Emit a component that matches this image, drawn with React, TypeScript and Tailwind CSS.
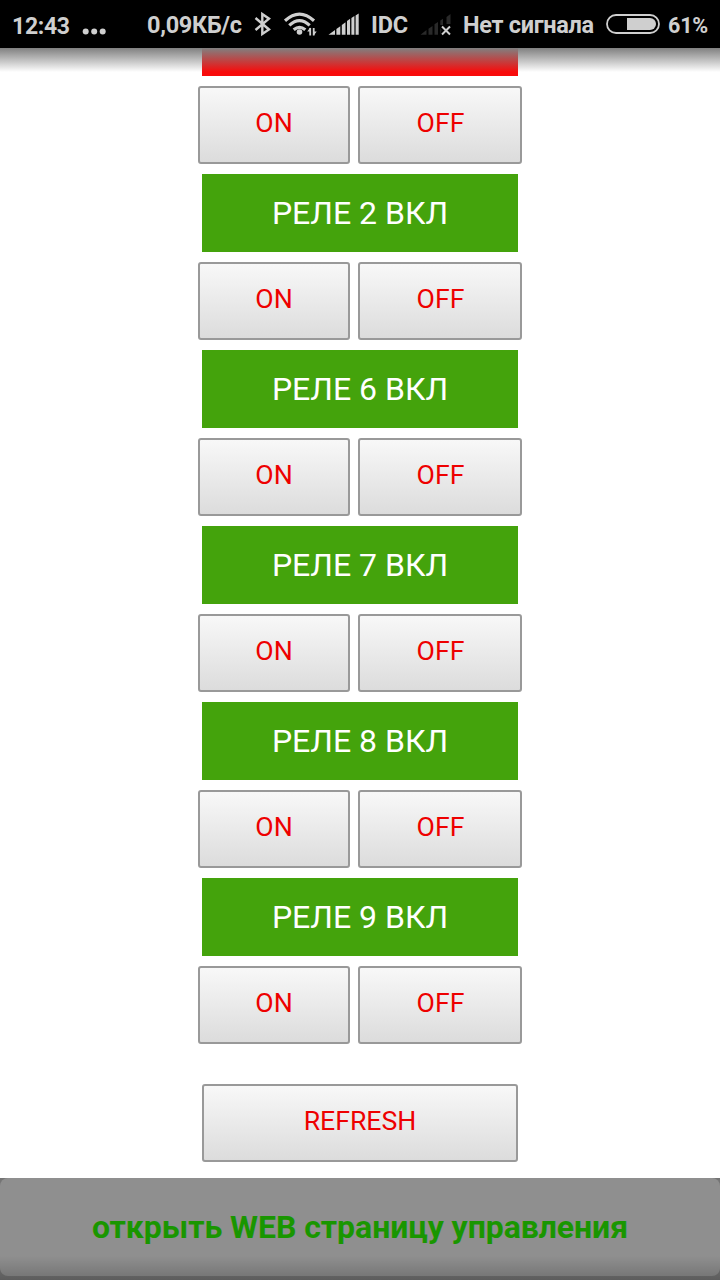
import React from "react";

const relays = [2, 6, 7, 8, 9];

const buttonFace =
  "flex h-[78px] items-center justify-center rounded-[3px] border-2 border-[#999] bg-linear-to-b from-[#f8f8f8] to-[#dcdcdc] pb-1 text-[26.67px] leading-none text-[#ee0000]";

function SwitchRow() {
  return (
    <div className="flex w-[324px] justify-between">
      <button className={`${buttonFace} w-[152px]`}>ON</button>
      <button className={`${buttonFace} w-[164px] pl-px`}>OFF</button>
    </div>
  );
}

function RelayGroup({ id }: { id: number }) {
  return (
    <div className="flex flex-col items-center gap-2.5">
      <div className="flex h-[78px] w-[316px] items-center justify-center bg-[#44a30c] text-[32px] leading-none text-white">
        РЕЛЕ {id} ВКЛ
      </div>
      <SwitchRow />
    </div>
  );
}

function StatusBar() {
  return (
    <header className="flex h-12 w-full shrink-0 items-center bg-black text-[23.5px] leading-none font-bold tracking-[-0.15px] whitespace-nowrap text-[#cfcfcf]">
      <span className="ml-3 w-[70px] pt-1 text-[23px] tracking-[-0.3px]">12:43</span>
      <svg className="h-12 w-[24px]" viewBox="82 0 24 48" fill="#cfcfcf">
        <circle cx="85.7" cy="31.5" r="3" />
        <circle cx="94.2" cy="31.5" r="3" />
        <circle cx="102.7" cy="31.5" r="3" />
      </svg>
      <span className="ml-[41px] w-[99px] pt-1 tracking-[-0.3px]">0,09КБ/с</span>
      <svg className="h-12 w-[30px]" viewBox="246 0 30 48" fill="none" stroke="#cfcfcf" strokeWidth="2.4">
        <path d="M255.5 18 L269 29.5 L262.3 34 V14 L269 18.7 L255.5 30" />
      </svg>
      <svg className="h-12 w-[46px]" viewBox="276 0 46 48" fill="none" stroke="#cfcfcf">
        <path d="M285 20.8 Q299.5 7.6 314 20.8 M289.3 25.4 Q299.5 15.9 309.7 25.4 M293.7 29.8 Q299.5 24.8 305.3 29.8" strokeWidth="3.2" />
        <circle cx="299.5" cy="32" r="2.8" fill="#cfcfcf" stroke="none" />
        <path d="M310.2 35.5 V28 M313.7 28 V35.5" strokeWidth="1.8" />
        <path d="M307.2 31.5 L310.2 27.5 V31.5 Z M316.7 31.5 L313.7 35.5 V31.5 Z" fill="#cfcfcf" stroke="none" />
      </svg>
      <svg className="h-12 w-[48px]" viewBox="322 0 48 48" fill="#cfcfcf">
        <path d="M328.5 34.7 L335 30 V34.7 Z M336.4 28.9 L340.3 26.2 V34.7 H336.4 Z M341.8 25 L345.5 22.3 V34.7 H341.8 Z M347 21 L350.1 18.8 V34.7 H347 Z M351.4 18 L354.4 16 V34.7 H351.4 Z M355.6 15.4 L358.7 13.5 V34.7 H355.6 Z" />
      </svg>
      <span className="w-[50px] pt-1 pl-px">IDC</span>
      <svg className="h-12 w-[42px]" viewBox="420 0 42 48">
        <path fill="#292929" d="M420.5 34.7 L426.5 30 V34.7 Z M428.5 28.7 L432.5 26 V34.7 H428.5 Z M434.5 24.3 L438 22 V34.7 H434.5 Z M440.3 20.6 L443 18.8 V25 H440.3 Z M440.3 28 L441.5 30 L440.3 34.7 Z M446.5 17 L450.5 14 V24 H446.5 Z" />
        <path fill="none" stroke="#cfcfcf" strokeWidth="2" d="M442 26.5 L450 34.5 M450 26.5 L442 34.5" />
      </svg>
      <span className="w-[144px] pt-1 pl-px tracking-[-0.3px]">Нет сигнала</span>
      <svg className="h-12 w-[54px]" viewBox="606 0 54 48">
        <rect x="607" y="15" width="52" height="18" rx="9" fill="none" stroke="#cfcfcf" strokeWidth="1.8" />
        <path fill="#cfcfcf" d="M627 18 H650 A6 6 0 0 1 650 30 H627 Z" />
      </svg>
      <span className="ml-2 pt-1 text-[21.5px]">61%</span>
    </header>
  );
}

export default function App() {
  return (
    <div className="relative flex h-[1280px] w-[720px] flex-col overflow-hidden bg-white font-[Roboto,sans-serif]">
      <StatusBar />
      <main className="flex h-[1130px] flex-col items-center gap-2.5">
        <div className="h-7 w-[316px] bg-[#f80b0b]" />
        <SwitchRow />
        {relays.map((id) => (
          <RelayGroup key={id} id={id} />
        ))}
        <button className={`${buttonFace} mt-[30px] w-[316px]`}>REFRESH</button>
      </main>
      <footer className="h-[102px] bg-[#747474]">
        <button className="flex h-[98px] w-full items-center justify-center rounded-lg bg-[#8f8f8f] text-[32px] leading-none font-bold tracking-[-0.06px] text-[#199600]">
          открыть WEB страницу управления
        </button>
      </footer>
      <div className="pointer-events-none absolute inset-x-0 top-12 h-6 bg-linear-to-b from-[#808080] to-[#808080]/0" />
      <div className="pointer-events-none absolute inset-x-0 bottom-0 h-6 bg-linear-to-b from-transparent to-black/20" />
    </div>
  );
}
